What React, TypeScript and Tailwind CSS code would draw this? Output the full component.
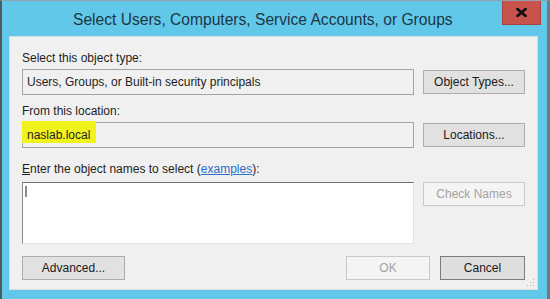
import React from 'react';

const font = "font-['Liberation_Sans',Arial,sans-serif]";

function Btn({ label, w, disabled, def }: { label: string; w: string; disabled?: boolean; def?: boolean }) {
  const look = disabled
    ? 'bg-[#f4f4f4] border-[#c9c9c9] text-[#a3a3a3]'
    : def
    ? 'bg-[#dedede] border-[#7d7d7d] text-[#1a1a1a]'
    : 'bg-[#e1e1e1] border-[#adadad] text-[#1a1a1a]';
  return (
    <div className={`${w} h-[24px] border flex items-center justify-center text-[12px] ${look}`}>
      {label}
    </div>
  );
}

export default function App() {
  return (
    <div className={`w-[550px] h-[299px] bg-[#62c8e9] border-l-2 border-r-[3px] border-t border-l-[#4f5a62] border-r-[#6d7a84] border-t-[#93a3ad] flex flex-col ${font}`}>
      {/* title bar */}
      <div className="h-[35px] flex items-start">
        <div className="flex-1 pt-[10px] pl-[71px] text-[15.6px] leading-[18px] text-[#1d3645] whitespace-nowrap">
          Select Users, Computers, Service Accounts, or Groups
        </div>
        <div className="w-[39px] h-[24px] mr-[6px] bg-[#c8534c] border border-[#a84540] border-t-0 flex items-center justify-center">
          <svg width="11" height="9" viewBox="0 0 11 9">
            <path d="M1.5 1 L9.5 8 M9.5 1 L1.5 8" stroke="#111" strokeWidth="2.6" strokeLinecap="square" />
          </svg>
        </div>
      </div>

      {/* body panel */}
      <div className="ml-[7px] mr-[9px] h-[254px] bg-[#f0f0f0] border border-[#d9dde0] px-[12px] pt-[14px] text-[12px] text-[#1e1e1e] relative">
        <div className="h-[15px] leading-[15px]">Select this object type:</div>
        <div className="mt-[3px] flex items-center gap-[9px]">
          <div className="w-[392px] h-[26px] border border-[#a3a3a3] bg-[#f0f0f0] flex items-center pl-[4px]">
            Users, Groups, or Built-in security principals
          </div>
          <Btn label="Object Types..." w="w-[102px]" />
        </div>

        <div className="mt-[9px] h-[15px] leading-[15px]">From this location:</div>
        <div className="mt-[3px] flex items-center gap-[9px]">
          <div className="w-[392px] h-[26px] border border-[#a3a3a3] bg-[#f0f0f0] flex items-center pl-[4px] relative">
            <span className="absolute left-[-1px] top-[-2px] w-[74px] h-[22px] bg-[#f2f21c]" />
            <span className="relative">naslab.local</span>
          </div>
          <Btn label="Locations..." w="w-[102px]" />
        </div>

        <div className="mt-[14px] h-[15px] leading-[15px]">
          <span className="underline">E</span>nter the object names to select (
          <span className="text-[#2a6fc9] underline">examples</span>):
        </div>
        <div className="mt-[5px] flex items-start gap-[9px]">
          <div className="w-[392px] h-[62px] bg-white border border-t-[#6f6f6f] border-l-[#8a8a8a] border-r-[#e2e2e2] border-b-[#e2e2e2] pl-[2px] pt-[3px]">
            <div className="w-[2px] h-[11px] bg-[#8c8c8c]" />
          </div>
          <Btn label="Check Names" w="w-[102px]" disabled />
        </div>

        <div className="mt-[12px] flex items-center justify-between">
          <Btn label="Advanced..." w="w-[103px]" />
          <div className="flex gap-[10px]">
            <Btn label="OK" w="w-[84px]" disabled />
            <Btn label="Cancel" w="w-[85px]" def />
          </div>
        </div>

        <svg className="absolute right-[2px] bottom-[2px]" width="8" height="8" viewBox="0 0 8 8">
          <rect x="6" y="0" width="1" height="1" fill="#b5b5b5" />
          <rect x="3" y="3" width="1" height="1" fill="#b5b5b5" />
          <rect x="6" y="3" width="1" height="1" fill="#b5b5b5" />
          <rect x="0" y="6" width="1" height="1" fill="#b5b5b5" />
          <rect x="3" y="6" width="1" height="1" fill="#b5b5b5" />
          <rect x="6" y="6" width="1" height="1" fill="#b5b5b5" />
        </svg>
      </div>
    </div>
  );
}
